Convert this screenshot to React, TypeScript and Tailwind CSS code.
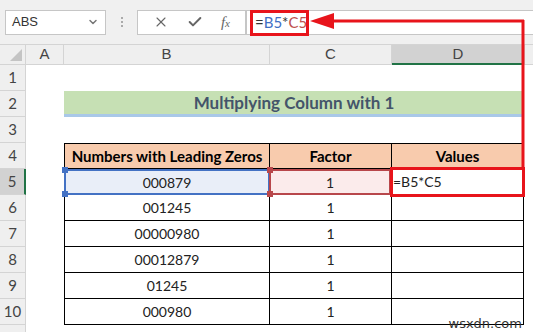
import { X, Check, ChevronDown } from "lucide-react";

// sheet data
const values = ["001245", "00000980", "00012879", "01245", "000980"];

const cellFont = { fontFamily: "Lato, 'Open Sans', sans-serif" };

function RowHead({ n, active }: { n?: number; active?: boolean }) {
  return (
    <div
      className={`w-[26px] shrink-0 flex items-center justify-center text-[15px] text-[#444] border-b border-r border-[#d4d4d4] ${
        active ? "bg-[#d2d2d2] border-r-2 border-r-[#217346]" : "bg-[#efefef]"
      }`}
    >
      {n}
    </div>
  );
}

export default function App() {
  return (
    <div
      className="relative w-[533px] h-[332px] overflow-hidden bg-white"
      style={{ fontFamily: "'Liberation Sans', Arial, sans-serif" }}
    >
      {/* formula bar */}
      <div className="h-[45px] bg-[#f0f0f0] flex items-center border-b border-[#d4d4d4]">
        <div className="ml-[5px] w-[101px] h-[25px] bg-white border border-[#c6c6c6] flex items-center justify-between px-[6px]">
          <span className="text-[13px] text-[#333]">ABS</span>
          <ChevronDown size={12} className="text-[#777]" strokeWidth={3} />
        </div>
        <div className="ml-[15px] flex flex-col gap-[2px]">
          <span className="w-[2px] h-[2px] bg-[#aaa]" />
          <span className="w-[2px] h-[2px] bg-[#aaa]" />
          <span className="w-[2px] h-[2px] bg-[#aaa]" />
        </div>
        <div className="ml-[14px] w-[109px] h-[25px] bg-white border border-[#c6c6c6] flex items-center justify-around px-[6px]">
          <X size={16} className="text-[#666]" strokeWidth={1.6} />
          <Check size={16} className="text-[#666]" strokeWidth={3} />
          <span className="text-[15px] italic text-[#666]" style={{ fontFamily: "'Liberation Serif', serif" }}>
            f<span className="text-[11px]">x</span>
          </span>
        </div>
        <div className="flex-1 h-[25px] bg-white border-y border-l border-[#c6c6c6] flex items-center pl-[8px] text-[15px]" style={cellFont}>
          <span className="text-[#333]">=</span>
          <span className="text-[#3f6fc4]">B5</span>
          <span className="text-[#333]">*</span>
          <span className="text-[#c0504d]">C5</span>
        </div>
      </div>

      {/* column headers */}
      <div className="flex h-[20px] text-[15px] text-[#444] bg-[#efefef]">
        <div className="w-[26px] shrink-0 border-r border-b border-[#d4d4d4] relative">
          <div className="absolute right-[3px] bottom-[3px] w-0 h-0 border-l-[12px] border-l-transparent border-b-[12px] border-b-[#c4c4c4]" />
        </div>
        <div className="w-[38px] shrink-0 border-r border-b border-[#d4d4d4] flex items-center justify-center">A</div>
        <div className="w-[206px] shrink-0 border-r border-b border-[#d4d4d4] flex items-center justify-center">B</div>
        <div className="w-[122px] shrink-0 border-r border-b border-[#d4d4d4] flex items-center justify-center">C</div>
        <div className="w-[132px] shrink-0 bg-[#d2d2d2] border-b-2 border-[#217346] flex items-center justify-center">D</div>
        <div className="flex-1 border-l border-b border-[#d4d4d4]" />
      </div>

      {/* rows */}
      <div style={cellFont}>
        <div className="flex h-[26px]">
          <RowHead n={1} />
        </div>
        <div className="flex h-[26px]">
          <RowHead n={2} />
          <div className="w-[38px] shrink-0" />
          <div className="w-[460px] shrink-0 bg-[#c6e0b4] border-b-[3px] border-[#a9c8e8] flex items-center justify-center text-[17px] font-bold text-[#44546a]">
            Multiplying Column with 1
          </div>
        </div>
        <div className="flex h-[26px]">
          <RowHead n={3} />
        </div>
        <div className="flex h-[26px]">
          <RowHead n={4} />
          <div className="w-[38px] shrink-0" />
          <div className="w-[206px] shrink-0 bg-[#f8cbad] border border-black flex items-center justify-center text-[15px] font-bold text-black">
            Numbers with Leading Zeros
          </div>
          <div className="w-[122px] shrink-0 bg-[#f8cbad] border-y border-r border-black flex items-center justify-center text-[15px] font-bold text-black">
            Factor
          </div>
          <div className="w-[132px] shrink-0 bg-[#f8cbad] border-y border-r border-black flex items-center justify-center text-[15px] font-bold text-black">
            Values
          </div>
        </div>
        <div className="flex h-[26px]">
          <RowHead n={5} active />
          <div className="w-[38px] shrink-0" />
          <div className="relative w-[206px] shrink-0 bg-[#e9eef8] border-2 border-[#4472c4] flex items-center justify-center text-[14px] text-[#222]">
            000879
            <span className="absolute -left-[4px] -top-[4px] w-[6px] h-[6px] bg-[#4472c4]" />
            <span className="absolute -left-[4px] -bottom-[4px] w-[6px] h-[6px] bg-[#4472c4]" />
          </div>
          <div className="relative w-[122px] shrink-0 -ml-[1px] bg-[#fbebeb] border-2 border-[#b8474b] flex items-center justify-center text-[14px] text-[#222]">
            1
            <span className="absolute -left-[4px] -top-[4px] w-[6px] h-[6px] bg-[#b8474b]" />
            <span className="absolute -left-[4px] -bottom-[4px] w-[6px] h-[6px] bg-[#b8474b]" />
          </div>
          <div className="w-[133px] shrink-0 border-b border-r border-black flex items-center pl-[2px] text-[14px] text-[#222]">
            =B5*C5
          </div>
        </div>
        {values.map((v, i) => (
          <div key={i} className="flex h-[26px]">
            <RowHead n={6 + i} />
            <div className="w-[38px] shrink-0" />
            <div className="w-[206px] shrink-0 border-x border-b border-black flex items-center justify-center text-[14px] text-[#222]">
              {v}
            </div>
            <div className="w-[122px] shrink-0 border-r border-b border-black flex items-center justify-center text-[14px] text-[#222]">
              1
            </div>
            <div className="w-[132px] shrink-0 border-r border-b border-black" />
          </div>
        ))}
        <div className="flex h-[26px]">
          <RowHead />
        </div>
      </div>

      {/* annotation overlay */}
      <div className="absolute left-[250px] top-[10px] w-[59px] h-[26px] border-[3px] border-[#e8141b]" />
      <div className="absolute left-[390px] top-[167px] w-[135px] h-[30px] border-[3px] border-[#e8141b]" />
      <svg className="absolute left-0 top-0" width="533" height="332">
        <polygon points="310,21 334,13 334,29" fill="#e8141b" />
        <line x1="332" y1="21" x2="524" y2="21" stroke="#e8141b" strokeWidth="3" />
        <line x1="523" y1="20" x2="523" y2="168" stroke="#e8141b" strokeWidth="3" />
      </svg>

      <div className="absolute right-[11px] bottom-[2px] text-[13px] leading-none text-[#333]" style={{ fontFamily: "'DejaVu Sans', sans-serif" }}>
        wsxdn.com
      </div>
    </div>
  );
}
